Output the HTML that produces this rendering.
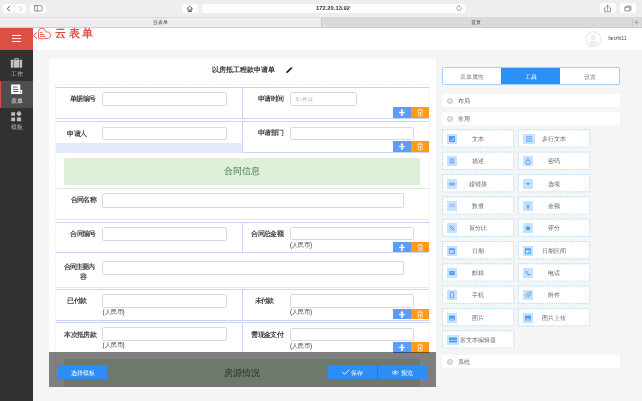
<!DOCTYPE html>
<html><head><meta charset="utf-8">
<style>
*{box-sizing:border-box;margin:0;padding:0}
html,body{width:642px;height:401px;overflow:hidden;background:#f5f5f5;font-family:"Liberation Sans",sans-serif;position:relative}
body{will-change:transform}
.a{position:absolute}
svg{display:block}
/* browser chrome */
#tb{left:0;top:0;width:642px;height:18px;background:#efedef;border-bottom:1px solid #dcdbdc}
.bb{background:#fdfdfd;border-radius:2px}
#tabs{left:0;top:18px;width:642px;height:10px;background:#eeecee;border-bottom:1px solid #cfcecf}
.tabt{font-size:5.2px;color:#444;top:19.4px;line-height:6px}
/* app */
#side{left:0;top:28px;width:33px;height:374px;background:#313131}
#sidehd{left:0;top:28px;width:33px;height:22px;background:#dc5045}
#hdr{left:33px;top:28px;width:609px;height:22px;background:#fff}
.sl{font-size:6.2px;color:#bdbdbd;width:33px;text-align:center;line-height:6px}
#card{left:48.5px;top:58.7px;width:387.5px;height:330px;background:#fff}
.lbl{font-size:6.6px;letter-spacing:-0.6px;color:#444;font-weight:bold;line-height:7px;margin-top:0.3px;white-space:nowrap}
.inp{border:0.7px solid #d9d9d9;border-radius:1.5px;background:#fff}
.rmb{font-size:6.3px;color:#3a3a3a;line-height:6px}
.mv{background:#5f9cf8;width:17.9px;height:11px}
.dl{background:#fd9a1a;width:18.5px;height:11px}
.hl{height:0.8px;background:#c9d5f3}
.gl{height:0.8px;background:#e5e5e5}
.vl{width:0.8px;background:#c9d5f3}
.it{width:72px;height:18px;background:#fff}
.ic{left:4.5px;top:4px;width:10px;height:10px;background:#bfdcfb}
.itt{font-size:6.2px;color:#666;line-height:7px;top:5.6px;white-space:nowrap}
</style></head><body>
<!-- toolbar -->
<div class="a" id="tb"></div>
<div class="a bb" style="left:3.1px;top:3.7px;width:10.9px;height:9.2px"></div>
<div class="a bb" style="left:15.2px;top:3.7px;width:10.5px;height:9.2px"></div>
<div class="a bb" style="left:30.2px;top:3.7px;width:15.8px;height:9.2px"></div>
<div class="a bb" style="left:181.5px;top:3.9px;width:16.2px;height:9.2px"></div>
<div class="a bb" style="left:201.5px;top:3.9px;width:263px;height:9.2px"></div>
<div class="a" style="left:201.5px;top:5.2px;width:263px;text-align:center;font-size:5.8px;font-weight:bold;color:#333;line-height:7px">172.20.13.92</div>
<div class="a bb" style="left:599.9px;top:3.4px;width:15.9px;height:9.7px"></div>
<div class="a bb" style="left:620px;top:3.4px;width:15.9px;height:9.7px"></div>
<svg class="a" style="left:0;top:0" width="642" height="28" viewBox="0 0 642 28">
<g fill="none" stroke-linecap="round" stroke-linejoin="round">
<path d="M9.8 6.3L7.2 8.6L9.8 10.9" stroke="#555" stroke-width="0.9"/>
<path d="M19.2 6.3L21.8 8.6L19.2 10.9" stroke="#c4c4c4" stroke-width="0.8"/>
<rect x="34.4" y="5.6" width="7.6" height="5.4" stroke="#666" stroke-width="0.7" rx="0.5"/>
<path d="M37.2 5.6V11" stroke="#666" stroke-width="0.7"/>
<path d="M187.3 8.6L189.8 6.1L192.4 8.6M188.1 8V11.6H191.6V8M189.3 11.6V9.6H190.4V11.6" stroke="#444" stroke-width="0.7"/>
<path d="M461.3 7.4A2.3 2.3 0 1 1 459.1 5.9" stroke="#777" stroke-width="0.6"/>
<path d="M459 5.1L460.3 5.9L459 6.7Z" fill="#777" stroke="none"/>
<path d="M605.3 7.8H604.7V11.8H610.5V7.8H609.9M607.6 10V5.2M606.5 6.3L607.6 5.2L608.7 6.3" stroke="#555" stroke-width="0.6"/>
<rect x="625.2" y="7.2" width="4.6" height="3.8" stroke="#555" stroke-width="0.6"/>
<path d="M626.3 7.2V6.1H630.9V10H629.8" stroke="#555" stroke-width="0.6"/>
</g></svg>
<!-- tabs -->
<div class="a" id="tabs"></div>
<div class="a" style="left:321px;top:18px;width:310.5px;height:10px;background:#dbdadb;border-left:1px solid #cdcccd;border-bottom:1px solid #cfcecf"></div>
<div class="a" style="left:631.5px;top:18px;width:10.5px;height:10px;background:#dbdadb;border-left:1px solid #cdcccd;border-bottom:1px solid #cfcecf"></div>
<div class="a tabt" style="left:0;width:321px;text-align:center">云表单</div>
<div class="a tabt" style="left:321px;width:310px;text-align:center">首页</div>
<svg class="a" style="left:630px;top:17px" width="12" height="11" viewBox="630 17 12 11"><path d="M636.4 20V24.6M634.1 22.3H638.7" stroke="#777" stroke-width="0.5" fill="none"/></svg>
<!-- app shell -->
<div class="a" id="side"></div>
<div class="a" id="sidehd"></div>
<div class="a" id="hdr"></div>
<div class="a" style="left:11.6px;top:35.2px;width:9.9px;height:1px;background:#fff"></div>
<div class="a" style="left:11.6px;top:38px;width:9.9px;height:1px;background:#fff"></div>
<div class="a" style="left:11.6px;top:40.9px;width:9.9px;height:1px;background:#fff"></div>
<div class="a" style="left:0;top:81px;width:33px;height:27px;background:#4e4e4e"></div>
<div class="a" style="left:0;top:81px;width:1.3px;height:27px;background:#dc5045"></div>
<svg class="a" style="left:0;top:27px" width="60" height="110" viewBox="0 27 60 110">
<g fill="#c2c2c2">
<path d="M14.3 59.9V58.6Q14.3 57.9 15 57.9H18Q18.7 57.9 18.7 58.6V59.9H17.9V58.7H15.1V59.9Z"/>
<rect x="10.8" y="59.7" width="2.4" height="8" rx="0.6"/>
<rect x="13.7" y="59.7" width="5.4" height="8"/>
<rect x="19.6" y="59.7" width="2.5" height="8" rx="0.6"/>
</g>
<g>
<rect x="11.1" y="84.6" width="9.2" height="9.3" rx="0.5" fill="#fff"/>
<rect x="12.9" y="86.6" width="4.5" height="0.9" fill="#555"/>
<rect x="12.9" y="88.9" width="5.6" height="0.9" fill="#555"/>
<rect x="12.9" y="91.1" width="5.6" height="0.9" fill="#555"/>
<rect x="19.6" y="90" width="2.6" height="3.9" rx="0.4" fill="#fff"/>
<rect x="20.4" y="91.2" width="0.8" height="1.6" fill="#555"/>
</g>
<g fill="#bdbdbd">
<rect x="11.2" y="112.2" width="3.9" height="3.6" rx="0.3"/>
<path d="M19 110.8L21.8 113.8L19 116.6L16.2 113.8Z"/>
<rect x="11.2" y="117.5" width="3.9" height="3.8" rx="0.3"/>
<rect x="16.9" y="117.5" width="4.2" height="3.8" rx="0.3"/>
</g>
</svg>
<div class="a sl" style="left:0;top:70.5px">工作</div>
<div class="a sl" style="left:0;top:98px;color:#e8e8e8">表单</div>
<div class="a sl" style="left:0;top:124.3px">模板</div>
<!-- logo -->
<div class="a" style="left:55px;top:27.3px;font-size:10.5px;line-height:12px;color:#dc5045;font-weight:bold;letter-spacing:2.6px">云表单</div>
<!-- avatar -->
<div class="a" style="left:608.2px;top:34.6px;font-size:5.4px;color:#555;line-height:7px;letter-spacing:-0.2px">fanzhi11</div>
<svg class="a" style="left:32px;top:26px" width="22" height="14" viewBox="0 0 22 14"><g fill="none" stroke="#dc5045" stroke-width="0.9" stroke-linecap="round" stroke-linejoin="round">
<path d="M6.6 12.4V5.2A3.5 3.5 0 0 1 13.4 4.6Q13.8 5.6 14.3 6.2A3.2 3.2 0 0 1 16.2 12.4Z"/>
<path d="M8.4 6.6H10.3M8.4 8.5H11.9M8.4 10.4H13.4"/>
<path d="M4.6 6.6Q2.2 7.8 1.8 9.5Q2.2 11.3 4.6 12.4"/>
</g></svg>
<svg class="a" style="left:584.5px;top:30.7px" width="16.5" height="16.5" viewBox="0 0 16.5 16.5"><circle cx="8.25" cy="8.25" r="7.5" fill="#fff" stroke="#e8e8e8" stroke-width="1.1"/><ellipse cx="8.25" cy="6.2" rx="2.6" ry="3" fill="#eeeeee"/><path d="M3.6 13.4Q3.9 9.9 7 9.5H9.5Q12.6 9.9 12.9 13.4Q10.6 15.3 8.25 15.3Q5.9 15.3 3.6 13.4Z" fill="#eeeeee"/></svg>
<!-- form card -->
<div class="a" id="card"></div>
<div class="a" style="left:211.5px;top:66.2px;font-size:7.4px;line-height:8px;color:#3a3a3a;font-weight:bold">以房抵工程款申请单</div>
<svg class="a" style="left:0;top:0" width="642" height="401" viewBox="0 0 642 401"><g stroke="#d4d4d4" stroke-width="0.6" stroke-dasharray="1 1.2" fill="none"><path d="M55.3 84.6H429.3M55.3 84.6V401M429.3 84.6V401"/></g></svg>
<div class="a " style="left:55.5px;top:87.3px;width:373.5px;height:0.8px;background:#c9d5f3"></div>
<div class="a " style="left:55.5px;top:118.2px;width:373.5px;height:0.8px;background:#c9d5f3"></div>
<div class="a " style="left:242.2px;top:87.3px;width:0.8px;height:30.900000000000006px;background:#c9d5f3"></div>
<div class="a lbl" style="left:70px;top:94.5px">单据编号</div>
<div class="a inp" style="left:102.3px;top:92.3px;width:124.50000000000001px;height:13.9px"></div>
<div class="a lbl" style="left:257.8px;top:94.5px">申请时间</div>
<div class="a inp" style="left:290px;top:92.4px;width:66.60000000000002px;height:13.7px"><span style="position:absolute;left:4.2px;top:3px;font-size:5.2px;line-height:7px;color:#aaa;letter-spacing:-0.2px">年-月-日</span></div>
<div class="a mv" style="left:392.8px;top:107px;height:10.8px"><svg width="17.9" height="10.8" viewBox="0 0 17.9 10.8"><g fill="#fff"><rect x="8.2" y="2.8" width="1.4" height="5.6"/><rect x="6.6" y="4.95" width="4.6" height="1"/><path d="M8.9 2l1.5 1.6h-3z M8.9 9.2l1.5-1.6h-3z M5.9 5.45l1.3-1.3v2.6z M11.9 5.45l-1.3-1.3v2.6z"/></g></svg></div>
<div class="a dl" style="left:410.5px;top:107px;height:10.8px"><svg width="18.5" height="10.8" viewBox="0 0 18.5 10.8"><g fill="none" stroke="#ffe7c4" stroke-width="0.8"><path d="M6.5 3.3h5.5 M8.2 3.2v-1h2.1v1 M7.1 3.5l0.4 5.4h3.5l0.4-5.4"/></g><rect x="8.5" y="5" width="1.5" height="2.4" fill="#ffe7c4"/></svg></div>
<div class="a " style="left:55.5px;top:121px;width:373.5px;height:0.8px;background:#c9d5f3"></div>
<div class="a " style="left:242.2px;top:121px;width:0.8px;height:31.400000000000006px;background:#c9d5f3"></div>
<div class="a " style="left:55.5px;top:143px;width:186.7px;height:9.6px;background:#e3eaf8"></div>
<div class="a " style="left:242.2px;top:152.2px;width:186.8px;height:0.8px;background:#c9d5f3"></div>
<div class="a lbl" style="left:67.4px;top:129.5px">申请人</div>
<div class="a inp" style="left:102.3px;top:126.7px;width:124.50000000000001px;height:13.7px"></div>
<div class="a lbl" style="left:257.8px;top:128.8px">申请部门</div>
<div class="a inp" style="left:290px;top:126.8px;width:123.6px;height:13.5px"></div>
<div class="a mv" style="left:392.8px;top:141px;height:10.8px"><svg width="17.9" height="10.8" viewBox="0 0 17.9 10.8"><g fill="#fff"><rect x="8.2" y="2.8" width="1.4" height="5.6"/><rect x="6.6" y="4.95" width="4.6" height="1"/><path d="M8.9 2l1.5 1.6h-3z M8.9 9.2l1.5-1.6h-3z M5.9 5.45l1.3-1.3v2.6z M11.9 5.45l-1.3-1.3v2.6z"/></g></svg></div>
<div class="a dl" style="left:410.5px;top:141px;height:10.8px"><svg width="18.5" height="10.8" viewBox="0 0 18.5 10.8"><g fill="none" stroke="#ffe7c4" stroke-width="0.8"><path d="M6.5 3.3h5.5 M8.2 3.2v-1h2.1v1 M7.1 3.5l0.4 5.4h3.5l0.4-5.4"/></g><rect x="8.5" y="5" width="1.5" height="2.4" fill="#ffe7c4"/></svg></div>
<div class="a " style="left:64.1px;top:157.7px;width:355.5px;height:27px;background:#dff0d8;border-radius:1.5px"></div>
<div class="a " style="left:64.1px;top:166px;width:355.5px;text-align:center;font-size:9px;line-height:10px;color:#3c763d;font-family:'Liberation Serif',serif">合同信息</div>
<div class="a " style="left:55.5px;top:188px;width:373.5px;height:0.8px;background:#e6e6e6"></div>
<div class="a lbl" style="left:70.5px;top:195.5px">合同名称</div>
<div class="a inp" style="left:102.2px;top:193px;width:301.5px;height:14.6px"></div>
<div class="a " style="left:55.5px;top:218.5px;width:373.5px;height:0.8px;background:#e6e6e6"></div>
<div class="a " style="left:55.5px;top:221.8px;width:373.5px;height:0.8px;background:#c9d5f3"></div>
<div class="a " style="left:242.2px;top:221.8px;width:0.8px;height:30.599999999999994px;background:#c9d5f3"></div>
<div class="a lbl" style="left:70.2px;top:229.5px">合同编号</div>
<div class="a inp" style="left:102.3px;top:226.8px;width:124.50000000000001px;height:14.0px"></div>
<div class="a lbl" style="left:251.3px;top:229.5px">合同总金额</div>
<div class="a inp" style="left:290px;top:227px;width:123.6px;height:13.3px"></div>
<div class="a rmb" style="left:290px;top:241.8px">(人民币)</div>
<div class="a mv" style="left:392.8px;top:241.8px;height:10.8px"><svg width="17.9" height="10.8" viewBox="0 0 17.9 10.8"><g fill="#fff"><rect x="8.2" y="2.8" width="1.4" height="5.6"/><rect x="6.6" y="4.95" width="4.6" height="1"/><path d="M8.9 2l1.5 1.6h-3z M8.9 9.2l1.5-1.6h-3z M5.9 5.45l1.3-1.3v2.6z M11.9 5.45l-1.3-1.3v2.6z"/></g></svg></div>
<div class="a dl" style="left:410.5px;top:241.8px;height:10.8px"><svg width="18.5" height="10.8" viewBox="0 0 18.5 10.8"><g fill="none" stroke="#ffe7c4" stroke-width="0.8"><path d="M6.5 3.3h5.5 M8.2 3.2v-1h2.1v1 M7.1 3.5l0.4 5.4h3.5l0.4-5.4"/></g><rect x="8.5" y="5" width="1.5" height="2.4" fill="#ffe7c4"/></svg></div>
<div class="a " style="left:55.5px;top:252.4px;width:373.5px;height:0.8px;background:#c9d5f3"></div>
<div class="a lbl" style="left:64.3px;top:262.7px;letter-spacing:-0.95px">合同主要内</div>
<div class="a lbl" style="left:79.8px;top:272.3px">容</div>
<div class="a inp" style="left:102.2px;top:260.5px;width:301.5px;height:14.1px"></div>
<div class="a " style="left:55.5px;top:286.5px;width:373.5px;height:0.8px;background:#e6e6e6"></div>
<div class="a " style="left:55.5px;top:289.4px;width:373.5px;height:0.8px;background:#c9d5f3"></div>
<div class="a " style="left:242.2px;top:289.4px;width:0.8px;height:30.200000000000045px;background:#c9d5f3"></div>
<div class="a lbl" style="left:67.4px;top:297.1px">已付款</div>
<div class="a inp" style="left:102.3px;top:294.3px;width:124.50000000000001px;height:13.9px"></div>
<div class="a rmb" style="left:102.5px;top:309px">(人民币)</div>
<div class="a lbl" style="left:254.5px;top:297.2px">未付款</div>
<div class="a inp" style="left:290px;top:294.2px;width:123.6px;height:13.8px"></div>
<div class="a rmb" style="left:290px;top:309px">(人民币)</div>
<div class="a mv" style="left:392.8px;top:308.5px;height:10.8px"><svg width="17.9" height="10.8" viewBox="0 0 17.9 10.8"><g fill="#fff"><rect x="8.2" y="2.8" width="1.4" height="5.6"/><rect x="6.6" y="4.95" width="4.6" height="1"/><path d="M8.9 2l1.5 1.6h-3z M8.9 9.2l1.5-1.6h-3z M5.9 5.45l1.3-1.3v2.6z M11.9 5.45l-1.3-1.3v2.6z"/></g></svg></div>
<div class="a dl" style="left:410.5px;top:308.5px;height:10.8px"><svg width="18.5" height="10.8" viewBox="0 0 18.5 10.8"><g fill="none" stroke="#ffe7c4" stroke-width="0.8"><path d="M6.5 3.3h5.5 M8.2 3.2v-1h2.1v1 M7.1 3.5l0.4 5.4h3.5l0.4-5.4"/></g><rect x="8.5" y="5" width="1.5" height="2.4" fill="#ffe7c4"/></svg></div>
<div class="a " style="left:55.5px;top:319.6px;width:373.5px;height:0.8px;background:#c9d5f3"></div>
<div class="a " style="left:55.5px;top:322.4px;width:373.5px;height:0.8px;background:#c9d5f3"></div>
<div class="a " style="left:242.2px;top:322.4px;width:0.8px;height:30.600000000000023px;background:#c9d5f3"></div>
<div class="a lbl" style="left:64.3px;top:330.5px">本次抵房款</div>
<div class="a inp" style="left:102.3px;top:327.4px;width:124.50000000000001px;height:13.9px"></div>
<div class="a rmb" style="left:102.5px;top:342px">(人民币)</div>
<div class="a lbl" style="left:251.3px;top:330.5px">需现金支付</div>
<div class="a inp" style="left:290px;top:327.5px;width:123.6px;height:13.5px"></div>
<div class="a rmb" style="left:290px;top:342.5px">(人民币)</div>
<div class="a mv" style="left:392.8px;top:342.2px;height:10.8px"><svg width="17.9" height="10.8" viewBox="0 0 17.9 10.8"><g fill="#fff"><rect x="8.2" y="2.8" width="1.4" height="5.6"/><rect x="6.6" y="4.95" width="4.6" height="1"/><path d="M8.9 2l1.5 1.6h-3z M8.9 9.2l1.5-1.6h-3z M5.9 5.45l1.3-1.3v2.6z M11.9 5.45l-1.3-1.3v2.6z"/></g></svg></div>
<div class="a dl" style="left:410.5px;top:342.2px;height:10.8px"><svg width="18.5" height="10.8" viewBox="0 0 18.5 10.8"><g fill="none" stroke="#ffe7c4" stroke-width="0.8"><path d="M6.5 3.3h5.5 M8.2 3.2v-1h2.1v1 M7.1 3.5l0.4 5.4h3.5l0.4-5.4"/></g><rect x="8.5" y="5" width="1.5" height="2.4" fill="#ffe7c4"/></svg></div>
<div class="a " style="left:64.1px;top:358.6px;width:355.5px;height:40px;background:#dff0d8;border-radius:1.5px"></div>
<div class="a " style="left:64.1px;top:368.4px;width:355.5px;text-align:center;font-size:9px;line-height:10px;color:#3c763d;font-family:'Liberation Serif',serif">房源情况</div>
<div class="a " style="left:48.5px;top:352px;width:387px;height:35.4px;background:rgba(0,0,0,.5)"></div>
<div class="a" style="left:58px;top:365.2px;width:49px;height:13.6px;background:#2a8ef6"></div>
<div class="a" style="left:58px;top:368.6px;width:49px;text-align:center;font-size:6.4px;line-height:7px;color:#fff">选择模板</div>
<div class="a" style="left:328px;top:365.2px;width:99px;height:13.6px;background:#2a8ef6"></div>
<div class="a" style="left:377px;top:365.2px;width:0.6px;height:13.6px;background:#2a78cc"></div>
<svg class="a" style="left:340px;top:367px" width="80" height="10" viewBox="340 367 80 10"><path d="M342.4 372.2L344.6 374.2L349.2 369.6" fill="none" stroke="#fff" stroke-width="0.9"/><path d="M391.9 372.6Q395.1 369.2 398.3 372.6Q395.1 376 391.9 372.6Z" fill="none" stroke="#fff" stroke-width="0.7"/><circle cx="395.1" cy="372.6" r="1" fill="#fff"/></svg>
<div class="a" style="left:350.8px;top:368.8px;font-size:6.4px;line-height:7px;color:#fff">保存</div>
<div class="a" style="left:400.6px;top:368.8px;font-size:6.4px;line-height:7px;color:#fff">预览</div>
<div class="a " style="left:48px;top:387.4px;width:390px;height:14px;background:#f5f5f5"></div>
<svg class="a" style="left:284px;top:65.5px" width="10" height="9" viewBox="0 0 10 9"><path d="M2.2 7.2L2.6 5.6L6.9 1.3L8.1 2.5L3.8 6.8Z" fill="#222"/><path d="M7.3 0.9L8.5 2.1" stroke="#222" stroke-width="0.8"/></svg>
<!-- right panel -->
<div class="a" style="left:441.8px;top:67px;width:178px;height:17.6px;border:1px solid #a3cff8;border-radius:2px;background:#fff"></div>
<div class="a" style="left:501.3px;top:68px;width:59px;height:15.7px;background:#2b8ff8"></div>
<div class="a" style="left:442px;top:72.6px;width:59.3px;text-align:center;font-size:6.3px;color:#888;line-height:7px">表单属性</div>
<div class="a" style="left:501.3px;top:72.6px;width:59.1px;text-align:center;font-size:6.3px;color:#fff;line-height:7px">工具</div>
<div class="a" style="left:560.4px;top:72.6px;width:59.6px;text-align:center;font-size:6.3px;color:#888;line-height:7px">设置</div>
<div class="a" style="left:442px;top:94px;width:178px;height:13.2px;background:#fff"></div>
<div class="a" style="left:442px;top:111.8px;width:178px;height:13.2px;background:#fff"></div>
<div class="a" style="left:442px;top:354.6px;width:178px;height:13.4px;background:#fff"></div>
<div class="a it" style="left:442.1px;top:129.50px"><svg class="a" style="left:5px;top:4.5px" width="10" height="10" viewBox="0 0 10 10"><rect width="10" height="10" fill="#c8e1fc"/><rect x="2" y="2" width="6" height="6" fill="#4a9af5"/><path d="M6.3 3.2V6.4H3.4" stroke="#c8e1fc" stroke-width="0.8" fill="none"/></svg><div class="a itt" style="left:0;width:72px;text-align:center">文本</div></div>
<div class="a it" style="left:518px;top:129.50px"><svg class="a" style="left:5px;top:4.5px" width="12" height="10" viewBox="0 0 12 10"><rect width="12" height="10" fill="#c8e1fc"/><path d="M3 2.8H9M3 5H9M3 7.2H7.5" stroke="#4a9af5" fill="none" stroke-width="0.9"/><circle cx="8.7" cy="7.1" r="0.8" fill="#4a9af5"/></svg><div class="a itt" style="left:0;width:72px;text-align:center">多行文本</div></div>
<div class="a it" style="left:442.1px;top:151.83px"><svg class="a" style="left:5px;top:4.5px" width="10" height="10" viewBox="0 0 10 10"><rect width="10" height="10" fill="#c8e1fc"/><path d="M2.6 3.1H7.4M2.6 5H7.4M2.6 6.9H7.4" stroke="#4a9af5" fill="none" stroke-width="0.9"/></svg><div class="a itt" style="left:0;width:72px;text-align:center">描述</div></div>
<div class="a it" style="left:518px;top:151.83px"><svg class="a" style="left:5px;top:4.5px" width="10" height="10" viewBox="0 0 10 10"><rect width="10" height="10" fill="#c8e1fc"/><rect x="3" y="4.6" width="4" height="3.6" rx="0.6" stroke="#4a9af5" fill="none" stroke-width="0.7"/><path d="M3.9 4.6V3.6A1.1 1.1 0 0 1 6.1 3.6V4.6" stroke="#4a9af5" fill="none" stroke-width="0.7"/></svg><div class="a itt" style="left:0;width:72px;text-align:center">密码</div></div>
<div class="a it" style="left:442.1px;top:174.17px"><svg class="a" style="left:5px;top:4.5px" width="10" height="10" viewBox="0 0 10 10"><rect width="10" height="10" fill="#c8e1fc"/><circle cx="3.7" cy="5" r="1.2" stroke="#4a9af5" fill="none" stroke-width="0.9"/><circle cx="6.3" cy="5" r="1.2" stroke="#4a9af5" fill="none" stroke-width="0.9"/></svg><div class="a itt" style="left:0;width:72px;text-align:center">超链接</div></div>
<div class="a it" style="left:518px;top:174.17px"><svg class="a" style="left:5px;top:4.5px" width="10" height="10" viewBox="0 0 10 10"><rect width="10" height="10" fill="#c8e1fc"/><path d="M2.8 4H7.2L5 6.6Z" fill="#4a9af5"/></svg><div class="a itt" style="left:0;width:72px;text-align:center">选项</div></div>
<div class="a it" style="left:442.1px;top:196.50px"><svg class="a" style="left:5px;top:4.5px" width="10" height="10" viewBox="0 0 10 10"><rect width="10" height="10" fill="#c8e1fc"/><text x="5" y="6.2" font-size="3.4" text-anchor="middle" fill="#4a9af5" font-family="Liberation Sans">123</text></svg><div class="a itt" style="left:0;width:72px;text-align:center">数值</div></div>
<div class="a it" style="left:518px;top:196.50px"><svg class="a" style="left:5px;top:4.5px" width="10" height="10" viewBox="0 0 10 10"><rect width="10" height="10" fill="#c8e1fc"/><path d="M3.3 2.6L5 5L6.7 2.6M5 5V8M3.6 5.4H6.4M3.6 6.6H6.4" stroke="#4a9af5" fill="none" stroke-width="0.7"/></svg><div class="a itt" style="left:0;width:72px;text-align:center">金额</div></div>
<div class="a it" style="left:442.1px;top:218.83px"><svg class="a" style="left:5px;top:4.5px" width="10" height="10" viewBox="0 0 10 10"><rect width="10" height="10" fill="#c8e1fc"/><circle cx="3.6" cy="3.6" r="0.9" stroke="#4a9af5" fill="none" stroke-width="0.7"/><circle cx="6.4" cy="6.4" r="0.9" stroke="#4a9af5" fill="none" stroke-width="0.7"/><path d="M7 2.8L3 7.2" stroke="#4a9af5" fill="none" stroke-width="0.7"/></svg><div class="a itt" style="left:0;width:72px;text-align:center">百分比</div></div>
<div class="a it" style="left:518px;top:218.83px"><svg class="a" style="left:5px;top:4.5px" width="10" height="10" viewBox="0 0 10 10"><rect width="10" height="10" fill="#c8e1fc"/><path d="M5 2.2L5.9 4.1L8 4.3L6.4 5.7L6.9 7.8L5 6.7L3.1 7.8L3.6 5.7L2 4.3L4.1 4.1Z" fill="#4a9af5"/></svg><div class="a itt" style="left:0;width:72px;text-align:center">评分</div></div>
<div class="a it" style="left:442.1px;top:241.17px"><svg class="a" style="left:5px;top:4.5px" width="10" height="10" viewBox="0 0 10 10"><rect width="10" height="10" fill="#c8e1fc"/><rect x="2.5" y="2.8" width="5" height="5" stroke="#4a9af5" fill="none" stroke-width="0.8"/><rect x="2.5" y="2.8" width="5" height="1.3" fill="#4a9af5"/><rect x="5.2" y="5.4" width="1.3" height="1.3" fill="#4a9af5"/></svg><div class="a itt" style="left:0;width:72px;text-align:center">日期</div></div>
<div class="a it" style="left:518px;top:241.17px"><svg class="a" style="left:5px;top:4.5px" width="10" height="10" viewBox="0 0 10 10"><rect width="10" height="10" fill="#c8e1fc"/><rect x="2.5" y="2.8" width="5" height="5" stroke="#4a9af5" fill="none" stroke-width="0.8"/><rect x="2.5" y="2.8" width="5" height="1.3" fill="#4a9af5"/><rect x="5.2" y="5.4" width="1.3" height="1.3" fill="#4a9af5"/></svg><div class="a itt" style="left:0;width:72px;text-align:center">日期区间</div></div>
<div class="a it" style="left:442.1px;top:263.50px"><svg class="a" style="left:5px;top:4.5px" width="10" height="10" viewBox="0 0 10 10"><rect width="10" height="10" fill="#c8e1fc"/><rect x="2.3" y="3" width="5.4" height="4" fill="#4a9af5"/><path d="M2.5 3.3L5 5.2L7.5 3.3" stroke="#c8e1fc" stroke-width="0.5" fill="none"/></svg><div class="a itt" style="left:0;width:72px;text-align:center">邮箱</div></div>
<div class="a it" style="left:518px;top:263.50px"><svg class="a" style="left:5px;top:4.5px" width="10" height="10" viewBox="0 0 10 10"><rect width="10" height="10" fill="#c8e1fc"/><path d="M3 2.6Q2.4 3 2.8 4.2Q3.8 6.6 6 7.4Q7 7.6 7.4 7L6.6 5.9L5.8 6.3Q4.3 5.5 3.8 4.3L4.3 3.6Z" fill="#4a9af5"/></svg><div class="a itt" style="left:0;width:72px;text-align:center">电话</div></div>
<div class="a it" style="left:442.1px;top:285.83px"><svg class="a" style="left:5px;top:4.5px" width="10" height="10" viewBox="0 0 10 10"><rect width="10" height="10" fill="#c8e1fc"/><rect x="3.4" y="2.2" width="3.2" height="5.6" rx="0.4" stroke="#4a9af5" fill="none" stroke-width="0.8"/></svg><div class="a itt" style="left:0;width:72px;text-align:center">手机</div></div>
<div class="a it" style="left:518px;top:285.83px"><svg class="a" style="left:5px;top:4.5px" width="10" height="10" viewBox="0 0 10 10"><rect width="10" height="10" fill="#c8e1fc"/><path d="M6.8 3.6L4 6.4A0.9 0.9 0 0 1 2.8 5.2L5.8 2.2A1.5 1.5 0 0 1 7.9 4.3L5 7.3" stroke="#4a9af5" fill="none" stroke-width="0.8"/></svg><div class="a itt" style="left:0;width:72px;text-align:center">附件</div></div>
<div class="a it" style="left:442.1px;top:308.17px"><svg class="a" style="left:5px;top:4.5px" width="10" height="10" viewBox="0 0 10 10"><rect width="10" height="10" fill="#c8e1fc"/><rect x="2.2" y="2.6" width="5.6" height="4.8" fill="#4a9af5"/><path d="M2.8 6.8L4.3 5L5.3 6L6 5.3L7.2 6.8Z" fill="#c8e1fc"/></svg><div class="a itt" style="left:0;width:72px;text-align:center">图片</div></div>
<div class="a it" style="left:518px;top:308.17px"><svg class="a" style="left:5px;top:4.5px" width="10" height="10" viewBox="0 0 10 10"><rect width="10" height="10" fill="#c8e1fc"/><rect x="2.2" y="2.6" width="5.6" height="4.8" fill="#4a9af5"/><path d="M2.8 6.8L4.3 5L5.3 6L6 5.3L7.2 6.8Z" fill="#c8e1fc"/></svg><div class="a itt" style="left:0;width:72px;text-align:center">图片上传</div></div>
<div class="a it" style="left:442.1px;top:330.50px"><svg class="a" style="left:5px;top:4.5px" width="12" height="10" viewBox="0 0 12 10"><rect width="12" height="10" fill="#c8e1fc"/><rect x="2" y="2.6" width="8" height="2.2" fill="#4a9af5"/><rect x="2" y="5.6" width="8" height="1.8" fill="#4a9af5"/></svg><div class="a itt" style="left:0;width:72px;text-align:center">富文本编辑器</div></div>
<svg class="a" style="left:0;top:0" width="642" height="401" viewBox="0 0 642 401"><g fill="none" stroke="#8ccff6" stroke-width="0.8" stroke-dasharray="1.1 1.1"><rect x="442.45" y="129.85" width="71.3" height="17.3"/><rect x="518.35" y="129.85" width="71.3" height="17.3"/><rect x="442.45" y="152.18" width="71.3" height="17.3"/><rect x="518.35" y="152.18" width="71.3" height="17.3"/><rect x="442.45" y="174.52" width="71.3" height="17.3"/><rect x="518.35" y="174.52" width="71.3" height="17.3"/><rect x="442.45" y="196.85" width="71.3" height="17.3"/><rect x="518.35" y="196.85" width="71.3" height="17.3"/><rect x="442.45" y="219.18" width="71.3" height="17.3"/><rect x="518.35" y="219.18" width="71.3" height="17.3"/><rect x="442.45" y="241.52" width="71.3" height="17.3"/><rect x="518.35" y="241.52" width="71.3" height="17.3"/><rect x="442.45" y="263.85" width="71.3" height="17.3"/><rect x="518.35" y="263.85" width="71.3" height="17.3"/><rect x="442.45" y="286.18" width="71.3" height="17.3"/><rect x="518.35" y="286.18" width="71.3" height="17.3"/><rect x="442.45" y="308.52" width="71.3" height="17.3"/><rect x="518.35" y="308.52" width="71.3" height="17.3"/><rect x="442.45" y="330.85" width="71.3" height="17.3"/></g></svg>
<svg class="a" style="left:447px;top:98.2px" width="6" height="6" viewBox="0 0 6 6"><circle cx="3" cy="3" r="2.4" fill="none" stroke="#888" stroke-width="0.6"/><path d="M1.9 2.5L3 3.6L4.1 2.5" fill="none" stroke="#888" stroke-width="0.6"/></svg>
<div class="a" style="left:458px;top:97.2px;font-size:6.2px;line-height:7px;color:#666">布局</div>
<svg class="a" style="left:447px;top:115.8px" width="6" height="6" viewBox="0 0 6 6"><circle cx="3" cy="3" r="2.4" fill="none" stroke="#888" stroke-width="0.6"/><path d="M1.9 2.5L3 3.6L4.1 2.5" fill="none" stroke="#888" stroke-width="0.6"/></svg>
<div class="a" style="left:458px;top:114.8px;font-size:6.2px;line-height:7px;color:#666">常用</div>
<svg class="a" style="left:447px;top:358.8px" width="6" height="6" viewBox="0 0 6 6"><circle cx="3" cy="3" r="2.4" fill="none" stroke="#888" stroke-width="0.6"/><path d="M1.9 2.5L3 3.6L4.1 2.5" fill="none" stroke="#888" stroke-width="0.6"/></svg>
<div class="a" style="left:458px;top:357.5px;font-size:6.2px;line-height:7px;color:#666">系统</div>
</body></html>
